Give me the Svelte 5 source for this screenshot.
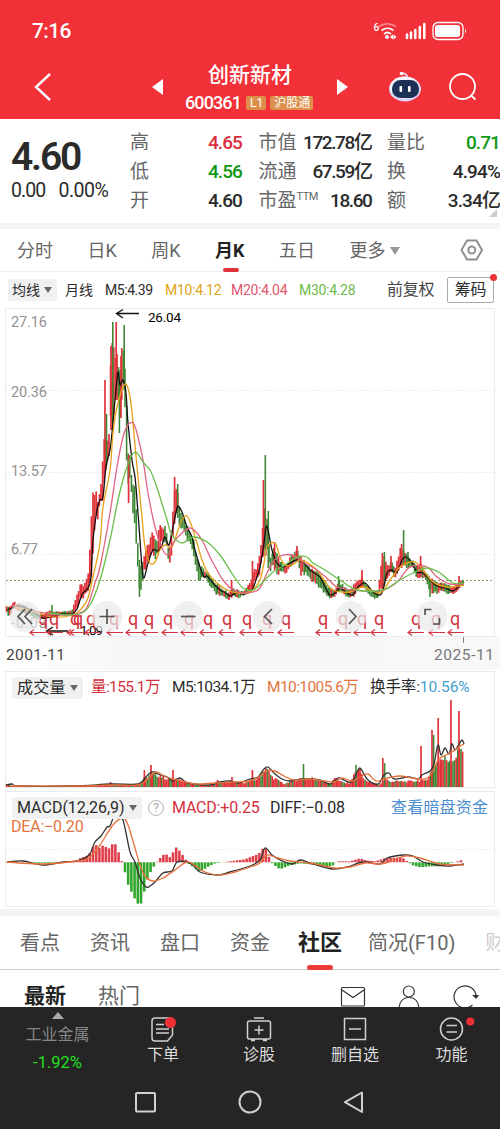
<script lang="ts">
  type Point = [number, number];
  type Band = [number, number, number];

  const quotes = [
    { label: "高", value: "4.65", tone: "up" },
    { label: "市值", value: "172.78亿" },
    { label: "量比", value: "0.71", tone: "down" },
    { label: "低", value: "4.56", tone: "down" },
    { label: "流通", value: "67.59亿" },
    { label: "换", value: "4.94%" },
    { label: "开", value: "4.60" },
    { label: "市盈", sup: "TTM", value: "18.60" },
    { label: "额", value: "3.34亿" },
  ];

  const periods = ["分时", "日K", "周K", "月K", "五日"];
  const sections = ["看点", "资讯", "盘口", "资金", "社区", "简况(F10)", "财务"];

  // high / low of the monthly bars
  const band: Band[] = [
    [6, 606, 612], [9, 606, 618], [13, 601, 610], [18, 602, 612], [24, 604, 614], [32, 608, 617],
    [42, 613, 620], [50, 610, 618], [62, 611, 615], [72, 610, 615], [77, 594, 610], [80, 582, 600],
    [84, 583, 598], [88, 575, 592], [90, 545, 585], [92, 500, 575], [94, 482, 545], [96, 490, 517],
    [98, 503, 522], [100, 490, 505], [102, 470, 507], [104, 433, 492], [107, 440, 467], [109, 430, 462],
    [111, 346, 425], [113, 340, 425], [115, 350, 400], [118, 353, 405], [120, 370, 420], [122, 345, 400],
    [124, 340, 385], [126, 385, 455], [128, 450, 490], [130, 455, 482], [132, 480, 505], [135, 482, 535],
    [137, 520, 550], [139, 560, 592], [141, 565, 593], [144, 553, 575], [147, 540, 570], [150, 538, 560],
    [153, 530, 555], [156, 540, 560], [160, 524, 550], [163, 525, 543], [166, 524, 545], [168, 545, 562],
    [171, 540, 563], [173, 505, 545], [175, 488, 520], [178, 490, 518], [180, 510, 530], [183, 512, 532],
    [186, 522, 540], [190, 530, 545], [194, 540, 560], [197, 558, 575], [199, 562, 582], [204, 568, 578],
    [210, 574, 587], [216, 582, 595], [222, 587, 597], [228, 592, 601], [232, 586, 597], [238, 590, 599],
    [244, 590, 596], [250, 582, 592], [253, 570, 588], [257, 567, 580], [260, 550, 575], [262, 530, 560],
    [264, 500, 556], [266, 512, 556], [268, 522, 560], [270, 555, 574], [274, 545, 565], [277, 552, 578],
    [281, 560, 572], [285, 565, 575], [290, 557, 570], [294, 550, 563], [297, 549, 562], [301, 555, 577],
    [306, 562, 575], [312, 568, 583], [318, 570, 587], [324, 578, 595], [329, 585, 600], [334, 590, 598],
    [339, 580, 592], [345, 586, 596], [350, 590, 599], [354, 582, 599], [358, 580, 590], [362, 575, 588],
    [366, 583, 592], [372, 590, 598], [378, 591, 600], [381, 560, 592], [384, 555, 588], [388, 565, 580],
    [391, 558, 572], [395, 567, 580], [400, 548, 570], [403, 545, 565], [408, 555, 570], [412, 560, 567],
    [416, 562, 578], [420, 562, 580], [425, 570, 580], [430, 576, 593], [436, 580, 595], [442, 582, 592],
    [448, 584, 595], [454, 586, 595], [459, 581, 590], [464, 577, 585],
  ];

  const wicks: [number, number, number, string][] = [
    [52, 605, 616, "g"], [105, 380, 450, "r"], [106.5, 414, 466, "g"], [111, 346, 430, "r"],
    [112.8, 322, 425, "g"], [116.2, 322, 400, "r"], [119.4, 380, 433, "g"], [121, 356, 418, "r"],
    [124.2, 325, 390, "g"], [128.6, 455, 503, "r"], [139.5, 560, 597, "g"], [174.6, 477, 512, "r"],
    [177.7, 484, 518, "g"], [231.6, 580, 598, "r"], [252.5, 561, 588, "r"], [263.4, 480, 556, "r"],
    [265.3, 455, 556, "g"], [268.3, 511, 568, "g"], [274.6, 542, 570, "r"], [297, 546, 560, "r"],
    [338.5, 576, 592, "g"], [362, 570, 588, "r"], [382.4, 553, 592, "r"], [384.4, 552, 586, "g"],
    [391, 556, 572, "r"], [401.6, 544, 568, "r"], [403.6, 530, 566, "g"], [408, 552, 562, "g"],
    [420.6, 556, 572, "r"], [430, 580, 597, "g"], [459, 576, 588, "r"],
  ];

  const ma5: Point[] = [
    [7, 610], [20, 606], [33, 612], [43, 618], [50, 617], [62, 614], [72, 614], [77, 609], [80, 600],
    [83, 593], [88, 588], [91, 577], [93, 540], [97, 510], [100, 500], [103, 497], [106, 467], [110, 450],
    [112, 433], [115, 400], [118, 372], [120, 385], [123, 380], [126, 393], [128, 423], [132, 460],
    [135, 477], [137, 500], [140, 540], [142, 567], [144, 578], [148, 563], [153, 550], [158, 551],
    [162, 545], [165, 537], [169, 545], [173, 527], [177, 508], [179, 507], [182, 512], [187, 527],
    [192, 537], [195, 550], [200, 567], [204, 577], [207, 576], [213, 583], [220, 590], [226, 593],
    [230, 596], [237, 593], [245, 594], [252, 590], [257, 577], [260, 567], [264, 543], [266, 527],
    [268, 530], [272, 550], [277, 563], [283, 567], [290, 563], [297, 560], [303, 562], [310, 570],
    [320, 577], [325, 587], [330, 595], [335, 593], [340, 588], [347, 593], [353, 595], [358, 587],
    [365, 583], [373, 592], [380, 595], [383, 590], [387, 573], [391, 570], [397, 572], [402, 560],
    [406, 557], [412, 563], [417, 572], [423, 573], [430, 580], [437, 586], [445, 588], [453, 591],
    [458, 587], [464, 582],
  ];
  const ma10: Point[] = [
    [15, 607], [35, 612], [52, 617], [73, 615], [82, 608], [88, 598], [93, 577], [100, 543], [103, 507],
    [110, 470], [113, 433], [117, 407], [125, 384], [130, 397], [133, 423], [137, 467], [142, 517],
    [145, 547], [150, 563], [155, 562], [160, 550], [165, 545], [172, 547], [177, 533], [182, 520],
    [187, 516], [192, 527], [197, 543], [202, 560], [208, 573], [217, 583], [227, 590], [237, 593],
    [247, 593], [253, 590], [260, 580], [264, 563], [267, 547], [275, 543], [280, 557], [285, 565],
    [292, 565], [300, 560], [308, 563], [317, 570], [324, 580], [333, 590], [350, 592], [363, 587],
    [380, 593], [390, 580], [400, 567], [410, 562], [417, 563], [423, 570], [433, 582], [447, 587], [464, 585],
  ];
  const ma20: Point[] = [
    [30, 610], [50, 614], [67, 615], [82, 612], [88, 605], [95, 583], [100, 567], [110, 513], [117, 467],
    [123, 437], [128, 425], [133, 423], [137, 433], [143, 460], [148, 493], [155, 527], [162, 548],
    [168, 555], [173, 543], [183, 532], [190, 528], [197, 533], [203, 542], [210, 557], [217, 570],
    [223, 580], [233, 590], [243, 593], [253, 592], [260, 588], [267, 573], [273, 562], [280, 556],
    [292, 555], [303, 562], [317, 570], [330, 581], [337, 587], [353, 590], [380, 591], [397, 582],
    [405, 572], [412, 566], [427, 567], [437, 577], [450, 584], [464, 584],
  ];
  const ma30: Point[] = [
    [48, 613], [67, 615], [80, 614], [90, 605], [100, 580], [110, 540], [118, 500], [125, 473], [132, 455],
    [137, 453], [143, 462], [150, 470], [155, 482], [160, 497], [167, 520], [172, 535], [182, 543],
    [193, 537], [207, 542], [220, 555], [233, 575], [243, 588], [253, 590], [263, 582], [273, 572],
    [285, 565], [297, 557], [307, 557], [313, 563], [325, 570], [340, 580], [357, 590], [383, 590],
    [400, 580], [413, 573], [427, 568], [440, 573], [453, 583], [464, 583],
  ];

  const volume: Point[] = [
    [6, 2], [8, 3], [12, 1], [70, 1.5], [110, 3], [138, 3], [143, 8], [150, 13], [155, 14], [160, 12],
    [167, 9], [175, 8], [180, 8], [190, 4], [210, 2], [217, 6], [232, 5], [245, 5], [258, 9], [264, 19],
    [266, 21], [268, 17], [272, 11], [280, 6], [285, 3], [292, 7], [305, 9], [312, 9], [320, 7], [330, 3],
    [336, 10], [342, 5], [350, 4], [355, 16], [358, 18], [362, 14], [366, 6], [380, 3], [386, 8], [390, 6],
    [410, 6], [418, 7], [425, 6], [430, 14], [434, 24], [440, 30], [447, 30], [453, 30], [458, 36], [461, 44], [464, 42],
  ];
  const volumeSpikes: [number, number, string][] = [
    [110.5, 5, "r"], [144.4, 17, "r"], [151, 22, "r"], [173, 17, "r"], [217.6, 7, "r"], [232, 10, "r"],
    [252.4, 17, "r"], [303.5, 23, "g"], [356, 22, "g"], [360, 19, "r"], [382.8, 29, "r"], [384.6, 24, "g"],
    [421, 41, "r"], [432, 57, "r"], [433.6, 52, "g"], [438.2, 69, "r"], [451, 87, "r"], [459, 76, "r"],
  ];
  const vol5: Point[] = [
    [6, 785], [12, 784], [20, 786], [75, 786], [110, 784], [138, 784], [145, 778], [150, 773], [154, 772],
    [160, 775], [167, 777], [173, 781], [180, 778], [188, 783], [210, 785], [220, 782], [230, 781],
    [238, 783], [250, 779], [258, 777], [264, 769], [268, 767], [274, 773], [282, 779], [290, 781],
    [303, 779], [312, 779], [320, 780], [330, 784], [338, 778], [344, 780], [352, 782], [358, 770],
    [361, 769], [368, 780], [378, 784], [384, 775], [389, 773], [394, 779], [408, 777], [418, 779],
    [422, 775], [430, 771], [434, 764], [438, 745], [441, 755], [445, 748], [449, 754], [452, 744],
    [455, 750], [459, 744], [462, 740], [464, 744],
  ];
  const vol10: Point[] = [
    [12, 786], [75, 786], [110, 785], [138, 785], [148, 779], [156, 772], [164, 776], [172, 779],
    [182, 781], [195, 784], [215, 783], [235, 782], [250, 781], [260, 776], [266, 771], [275, 771],
    [284, 776], [294, 780], [310, 779], [325, 781], [334, 782], [342, 778], [352, 781], [360, 777],
    [368, 774], [376, 781], [388, 778], [400, 776], [412, 778], [425, 779], [432, 773], [438, 760],
    [444, 756], [450, 753], [455, 750], [460, 746], [464, 744],
  ];

  const macd: Point[] = [
    [6, 0.5], [20, 0.5], [40, -1], [60, -0.5], [75, 1], [80, 4], [88, 7], [92, 12], [94, 19], [100, 14],
    [104, 18], [108, 12], [111, 18], [117, 18], [120, 3], [122, 1], [124, -6], [128, -22], [134, -35],
    [140, -45], [144, -30], [148, -15], [152, -7], [156, -1], [158, 2], [165, 9], [170, 5], [176, 15],
    [180, 11], [185, 4], [188, -1], [195, -6], [200, -10], [207, -5], [215, -1], [230, 1], [245, 3],
    [252, 6], [258, 8], [262, 12], [264, 17], [268, 9], [270, 2], [273, -2], [280, -7], [290, -3],
    [300, -1], [310, -2], [325, -4], [332, -4], [337, 1], [350, 1], [360, 4], [366, 2], [375, 1],
    [385, 4], [402, 5], [407, 1], [413, -3], [420, -5], [430, -4], [440, -4], [450, -1], [458, 1], [464, 3],
  ];
  const diff: Point[] = [
    [7, 862], [23, 861], [43, 865], [63, 862], [77, 861], [89, 855], [95, 842], [101, 836], [107, 827],
    [110, 826], [115, 815], [122, 818], [125, 828], [130, 852], [135, 862], [140, 878], [146, 887],
    [150, 886], [155, 882], [163, 873], [172, 871], [177, 862], [187, 862], [193, 865], [200, 872],
    [217, 875], [230, 872], [250, 866], [260, 860], [265, 848], [272, 855], [280, 860], [292, 864],
    [300, 860], [310, 863], [332, 869], [347, 867], [363, 862], [380, 864], [387, 858], [403, 855],
    [413, 856], [423, 862], [437, 865], [450, 866], [464, 864],
  ];
  const dea: Point[] = [
    [7, 862], [43, 864], [77, 861], [89, 858], [100, 845], [113, 825], [123, 818], [128, 825], [135, 848],
    [140, 865], [145, 876], [153, 881], [163, 878], [175, 870], [187, 862], [197, 867], [205, 872],
    [220, 875], [235, 872], [250, 867], [260, 863], [267, 855], [278, 858], [290, 861], [310, 863],
    [325, 866], [335, 868], [350, 867], [365, 863], [380, 864], [392, 861], [405, 856], [420, 858],
    [440, 864], [464, 865],
  ];

  const marks = [43, 54, 75, 78, 91, 114, 133, 149, 168, 189, 208, 227, 247, 267, 286, 323, 343, 362, 379, 416, 436, 455];
  const arrows = [30, 47, 67, 70, 85, 107, 126, 142, 162, 181, 200, 219, 240, 258, 278, 316, 335, 354, 371, 408, 429, 448];

  function at(points: number[][], x: number, k = 1) {
    const i = Math.max(1, points.findIndex((p) => p[0] >= x));
    const a = points[i - 1];
    const b = points[i];
    return a[k] + ((b[k] - a[k]) * (x - a[0])) / (b[0] - a[0]);
  }

  // repeatable jitter, 0..1
  function noise(n: number) {
    const v = Math.sin(n * 12.9898) * 43758.5453;
    return v - Math.floor(v);
  }

  // Catmull-Rom through the points, as cubic segments
  function curve(p: Point[]) {
    let d = `M${p[0]}`;
    for (let i = 0; i < p.length - 1; i++) {
      const a = p[i - 1] ?? p[i];
      const b = p[i];
      const c = p[i + 1];
      const e = p[i + 2] ?? c;
      d += `C${b[0] + (c[0] - a[0]) / 6},${b[1] + (c[1] - a[1]) / 6} ${c[0] - (e[0] - b[0]) / 6},${c[1] - (e[1] - b[1]) / 6} ${c}`;
    }
    return d;
  }

  const xs = Array.from({ length: 286 }, (_, i) => 6.6 + i * 1.6);

  const candles = xs.map((x, i) => {
    const hi = at(band, x, 1);
    const lo = at(band, x, 2);
    const slope = at(ma5, Math.min(463, x + 2)) - at(ma5, Math.max(8, x - 1));
    const up = slope + (noise(i) - 0.5) * 7 < 0.3;
    const span = lo - hi;
    return {
      x,
      hi: hi + span * 0.25 * noise(i + 7),
      lo: lo - span * 0.25 * noise(i + 31),
      tone: up ? "r" : "g",
    };
  });

  const volumes = xs.map((x, i) => ({
    x,
    h: at(volume, x) * (0.74 + 0.36 * noise(i + 3)),
    tone: noise(i + 53) < 0.72 ? "r" : "g",
  }));

  const bars = xs.filter((_, i) => i % 2 === 0).map((x) => ({ x, h: at(macd, x) }));
</script>

<main>
  <header>
    <div class="status">
      <span>7:16</span>
      <svg width="94" height="20" viewBox="373 21 94 20">
        <text x="373.5" y="30.5" class="six">6</text>
        <g fill="none" stroke="#fff" stroke-width="1.7">
          <path d="M379 26.5q8-5.5 17 0" opacity=".45" />
          <path d="M381.5 30.5q6-4.500 12 0M384 34q3.500-3 7 0" />
        </g>
        <circle cx="387" cy="37" r="2" fill="#fff" />
        <path d="M393 34.500l-3 2.500 3 2.500zM393.500 34.500l3 2.500-3 2.500z" fill="#fff" />
        <path d="M407 38v-3.500M411 38v-5.500M415.300 38v-8M419.800 38v-11M424.300 38v-14" stroke="#fff" stroke-width="2.500" stroke-linecap="round" />
        <rect x="433" y="22.500" width="30" height="17" rx="5" fill="none" stroke="#fff" stroke-width="1.300" />
        <rect x="435" y="25" width="25" height="12" rx="2.500" fill="#fff" />
        <path d="M465 28.500q2 2.500 0 5z" fill="#fff" />
      </svg>
    </div>
    <div class="titlebar">
      <svg class="back" width="18" height="30" viewBox="0 0 18 30"><path d="M16 2L2 15l14 13" /></svg>
      <i class="prev"></i>
      <div class="title">
        <h1>创新新材</h1>
        <p><b>600361</b><em>L1</em><em>沪股通</em></p>
      </div>
      <i class="next"></i>
      <svg class="robot" width="34" height="32" viewBox="0 0 34 32">
        <path d="M13.500 2.500q4-1 6 3" fill="none" stroke="#e8dcff" stroke-width="1.500" />
        <circle cx="13.500" cy="2.500" r="1.800" fill="#fff" />
        <ellipse cx="17" cy="18" rx="16" ry="12.500" fill="#dcd4f7" />
        <ellipse cx="16.500" cy="16.500" rx="14.500" ry="11" fill="#fbf8ff" />
        <rect x="4" y="9" width="27" height="18" rx="8.500" fill="#1d3156" />
        <rect x="11.500" y="15" width="2.600" height="6" rx="1" fill="#fff" />
        <rect x="20" y="15" width="2.600" height="6" rx="1" fill="#fff" />
      </svg>
      <svg class="search" width="28" height="28" viewBox="0 0 28 28">
        <circle cx="13.500" cy="13.500" r="12.500" />
        <path d="M22 22.500l4.500 4" />
      </svg>
    </div>
  </header>

  <section class="quote">
    <div class="price">
      <strong>4.60</strong>
      <p><span>0.00</span><span>0.00%</span></p>
    </div>
    <dl>
      {#each quotes as q}
        <div>
          <dt>{q.label}{#if q.sup}<sup>{q.sup}</sup>{/if}</dt>
          <dd class={q.tone}>{q.value}</dd>
        </div>
      {/each}
    </dl>
    <i class="corner"></i>
  </section>

  <nav class="periods">
    {#each periods as p}
      <span class:active={p === "月K"}>{p}</span>
    {/each}
    <span class="more">更多<i class="caret"></i></span>
    <svg width="24" height="22" viewBox="0 0 24 22">
      <path d="M7 1.500h9.500L22 11l-5.500 9.500H7L1.500 11z" />
      <circle cx="11.800" cy="11" r="3.500" />
    </svg>
  </nav>

  <div class="averages">
    <span class="pick">均线<i class="caret"></i></span>
    <span class="cn">月线</span>
    <span class="m5">M5:4.39</span>
    <span class="m10">M10:4.12</span>
    <span class="m20">M20:4.04</span>
    <span class="m30">M30:4.28</span>
    <span class="adj">前复权</span>
    <span class="chips">筹码</span>
  </div>

  <svg class="kline" width="500" height="362" viewBox="0 308 500 362">
    <defs>
      <linearGradient id="strip" x1="0" x2="1" y1="0" y2="0">
        <stop offset="0" stop-color="#fff" />
        <stop offset=".25" stop-color="#f7f7f7" />
        <stop offset="1" stop-color="#f8f8f8" />
      </linearGradient>
    </defs>
    <rect x="0" y="636" width="500" height="34" fill="url(#strip)" />
    <path d="M6 308.500H495M5.500 308V636M494.500 308V636M6 636.500H495" class="frame" />
    <path d="M6 390.500H494M6 472.500H494M6 554.500H494" class="grid" />
    <path d="M6 580.500H494" class="last" />

    <g class="axis">
      <text x="11" y="327" textLength="36">27.16</text>
      <text x="11" y="397" textLength="36">20.36</text>
      <text x="11" y="475.500" textLength="36">13.57</text>
      <text x="11" y="554" textLength="27">6.77</text>
      <text x="11" y="628" textLength="36">-0.03</text>
    </g>

    {#each candles as c}
      <path d="M{c.x} {c.hi}V{c.lo}" class={c.tone} />
    {/each}
    {#each wicks as [x, hi, lo, tone]}
      <path d="M{x} {hi}V{lo}" class={tone} />
    {/each}

    <g class="lines">
      <path d={curve(ma5)} stroke="#111" />
      <path d={curve(ma10)} stroke="#e6a11a" />
      <path d={curve(ma20)} stroke="#e0637f" />
      <path d={curve(ma30)} stroke="#6abf4b" />
    </g>

    <g class="extreme">
      <path d="M139 313.500H117M123 309.500L116.500 313.500L123 318" />
      <text x="148" y="321.500" textLength="33">26.04</text>
      <path d="M68 631H47M53 627L46.500 631L53 635" />
      <text x="80" y="635" textLength="23">1.09</text>
    </g>

    <g class="marks">
      {#each marks as x}
        <text {x} y="625">q</text>
      {/each}
      {#each arrows as x}
        <path d="M{x + 16} 632.500H{x}M{x + 4} 629.500L{x} 632.500L{x + 4} 635.500" />
      {/each}
    </g>

    <g class="tools">
      {#each [25, 107, 188, 268, 351, 432] as x}
        <circle cx={x} cy="616.500" r="15.500" />
      {/each}
      <path d="M25 609L18 616.500L25 624M32 609L25 616.500L32 624" />
      <path d="M99.500 616.500H114.500M107 609V624" />
      <path d="M181 616.500H195.500" />
      <path d="M272 609L264.500 616.500L272 624" />
      <path d="M349 609L356 616.500L349 624" />
      <path d="M425 615V609.500H431.500M433 624H439.500V618" />
    </g>

    <path d="M463.500 637V643" stroke="#888" />
    <text x="6" y="660" class="date dark" textLength="59">2001-11</text>
    <text x="434" y="660" class="date" textLength="60">2025-11</text>
  </svg>

  <section class="panel volume">
    <div class="legend">
      <span class="pick">成交量<i class="caret"></i></span>
      <span class="red">量:155.1万</span>
      <span>M5:1034.1万</span>
      <span class="orange">M10:1005.6万</span>
      <span>换手率:<span class="blue">10.56%</span></span>
    </div>
    <svg width="500" height="118" viewBox="0 671 500 118">
      <path d="M6 671.500H495M5.500 671V787M494.500 671V787M6 787.500H495" class="frame" />
      {#each volumes as v}
        <path d="M{v.x} 787V{787 - v.h}" class={v.tone} />
      {/each}
      {#each volumeSpikes as [x, h, tone]}
        <path d="M{x} 787V{787 - h}" class={tone} />
      {/each}
      <g class="lines">
        <path d={curve(vol5)} stroke="#333" />
        <path d={curve(vol10)} stroke="#e8703a" />
      </g>
    </svg>
  </section>

  <section class="panel macd">
    <div class="legend">
      <span class="pick">MACD(12,26,9)<i class="caret"></i></span>
      <span class="help">?</span>
      <span class="red">MACD:+0.25</span>
      <span>DIFF:−0.08</span>
      <span class="link">查看暗盘资金</span>
      <span class="orange dea">DEA:−0.20</span>
    </div>
    <svg width="500" height="120" viewBox="0 789 500 120">
      <path d="M6 791.500H495M5.500 791V906M494.500 791V906M6 906.500H495" class="frame" />
      <path d="M6 849.500H494" class="grid" />
      {#each bars as b}
        <path d="M{b.x} 862.300v{-b.h}" class={b.h > 0 ? "mr" : "mg"} />
      {/each}
      <g class="lines">
        <path d={curve(diff)} stroke="#333" />
        <path d={curve(dea)} stroke="#e8703a" />
      </g>
    </svg>
  </section>

  <nav class="sections">
    {#each sections as s}
      <span class:active={s === "社区"}>{s}</span>
    {/each}
  </nav>

  <div class="feed">
    <b>最新</b>
    <span>热门</span>
    <svg width="140" height="26" viewBox="339 984 140 26">
      <rect x="341.500" y="987.500" width="23" height="18.500" rx="1" />
      <path d="M342 990l11 7.500 11-7.500" />
      <circle cx="408.800" cy="991.500" r="5.500" />
      <path d="M399 1010c0-8 4-12.500 10-12.500s10 4.500 10 12.500" />
      <path d="M476 995.500a11 11 0 1 0-3.500 9.500" />
      <path d="M473.500 995.500h4.500l-2 2.500z" fill="#333" />
    </svg>
  </div>

  <footer>
    <div class="menu">
      <div class="sector">
        <i></i>
        <span>工业金属</span>
        <b>-1.92%</b>
      </div>
      <div class="item">
        <svg width="26" height="26" viewBox="0 0 26 26">
          <path d="M5 2h14.500q3 0 3 3v14l-5 6H5q-3 0-3-3V5q0-3 3-3zM6 8.500h8M6 13h13M6 17h13" />
          <circle cx="20.500" cy="6.500" r="5.500" class="dot" />
        </svg>
        下单
      </div>
      <div class="item">
        <svg width="26" height="26" viewBox="0 0 26 26">
          <path d="M8 2h10M3.500 5h19q2 0 2 2v14q0 2-2 2h-19q-2 0-2-2V7q0-2 2-2zM13 9.500v9M8.500 14h9M5 24.500h4M17 24.500h4" />
        </svg>
        诊股
      </div>
      <div class="item">
        <svg width="26" height="26" viewBox="0 0 26 26">
          <path d="M2.500 2.500h21v21h-21zM7 13h12" />
        </svg>
        删自选
      </div>
      <div class="item">
        <svg width="46" height="26" viewBox="-10 0 46 26">
          <circle cx="12.500" cy="13" r="11" />
          <path d="M7.500 9.500h10.500M7.500 16h10.500" />
          <circle cx="31.300" cy="5.500" r="4" class="dot" />
        </svg>
        功能
      </div>
    </div>
    <svg class="system" width="500" height="30" viewBox="0 1087 500 30">
      <rect x="136" y="1093" width="19" height="18.500" rx="1" />
      <circle cx="250" cy="1102" r="10.500" />
      <path d="M362 1092.500V1112L345 1102.200z" stroke-linejoin="round" />
    </svg>
  </footer>
</main>

<style>
  :global(body) {
    margin: 0;
  }

  main {
    width: 500px;
    height: 1129px;
    overflow: hidden;
    background: #fff;
    color: #2b2b2b;
    font-family: Roboto, "Noto Sans CJK SC", sans-serif;
    font-size: 15px;
    line-height: 1;
    white-space: nowrap;
  }

  i,
  em {
    font-style: normal;
  }

  h1,
  p,
  dl,
  dd {
    margin: 0;
  }

  header {
    height: 119px;
    background: #f13038;
    color: #fff;
  }

  .status {
    display: flex;
    justify-content: space-between;
    box-sizing: border-box;
    height: 62px;
    padding: 21px 33px 0 32px;
    font-size: 21px;
    font-weight: 500;
    letter-spacing: -0.6px;
  }

  .six {
    font-size: 10px;
    fill: #fff;
  }

  .titlebar {
    display: grid;
    grid-template-columns: 118px 34px 162px 41px 60px 28px;
    align-items: center;
    height: 50px;
    padding-left: 34px;
  }

  .titlebar > svg,
  .titlebar > i {
    margin-bottom: 6px;
  }

  .back,
  .search {
    fill: none;
    stroke: #fff;
    stroke-width: 2.4;
  }

  .search {
    stroke-width: 1.8;
  }

  .prev,
  .next {
    width: 0;
    border: 8px solid transparent;
    border-left: 0;
    border-right: 11px solid #fff;
  }

  .next {
    margin-left: -11px;
    border-right: 0;
    border-left: 11px solid #fff;
  }

  .title {
    width: 130px;
  }

  .title h1 {
    margin-left: 22px;
    font-size: 21px;
    font-weight: 500;
    line-height: 26px;
  }

  .title p {
    display: flex;
    align-items: center;
    gap: 4px;
    height: 30px;
    margin-left: -1px;
  }

  .title b {
    margin-right: 1px;
    font-size: 18px;
    font-weight: 500;
    letter-spacing: -0.9px;
  }

  .title em {
    padding: 0 3px 0 4px;
    border-radius: 2px;
    background: #dd904c;
    font-size: 12px;
    line-height: 14px;
  }

  .robot {
    margin-left: -1px;
  }

  .quote {
    position: relative;
    display: flex;
    height: 104px;
    border-bottom: 6px solid #f4f4f4;
  }

  .price {
    width: 130px;
    padding: 18px 0 0 11px;
    box-sizing: border-box;
  }

  .price strong {
    display: block;
    font-size: 39px;
    font-weight: 600;
    line-height: 41px;
    letter-spacing: -2.2px;
  }

  .price p {
    display: flex;
    gap: 13px;
    margin-top: 3px;
    font-size: 19.5px;
    letter-spacing: -0.9px;
  }

  .price p span:last-child {
    letter-spacing: -0.5px;
  }

  dl {
    display: grid;
    grid-template-columns: 112px 112px 113px;
    grid-auto-rows: 29px;
    column-gap: 16.500px;
    margin-top: 9px;
    font-size: 19px;
    line-height: 29px;
  }

  dl div {
    display: flex;
    justify-content: space-between;
  }

  dt {
    color: #666;
  }

  dt sup {
    display: inline-block;
    font-size: 11px;
    line-height: 10px;
    vertical-align: 7px;
    letter-spacing: -0.5px;
  }

  dd {
    font-weight: 500;
    letter-spacing: -0.9px;
  }

  /* the market value column is the tight one */
  dl div:nth-child(3n + 2) dd {
    letter-spacing: -1.4px;
    margin-right: -1px;
  }

  .up {
    color: #d92f3c;
  }

  .down {
    color: #0f9812;
  }

  .corner {
    position: absolute;
    right: 3px;
    bottom: 6px;
    border-left: 8px solid transparent;
    border-bottom: 8px solid #ccc;
  }

  .periods {
    display: flex;
    align-items: center;
    gap: 34.5px;
    height: 42px;
    padding-left: 17px;
    border-bottom: 1px solid #eee;
    color: #666;
    font-size: 18px;
  }

  .periods span {
    position: relative;
    line-height: 43px;
  }

  .periods .active {
    color: #222;
    font-weight: 700;
  }

  .periods .active::after,
  .sections .active::after {
    content: "";
    position: absolute;
    left: 8px;
    bottom: 0;
    width: 16px;
    height: 4px;
    border-radius: 2px;
    background: #e2303a;
  }

  .periods svg {
    margin-left: 26px;
    fill: none;
    stroke: #909090;
    stroke-width: 2;
  }

  .caret {
    display: inline-block;
    margin-left: 4px;
    border: 4.500px solid transparent;
    border-top: 6px solid #666;
    border-bottom: 0;
    vertical-align: 2px;
  }

  .periods .caret {
    border-width: 8px 5px 0;
    border-top-color: #999;
  }

  .averages {
    display: grid;
    grid-template-columns: 57px 40px 60px 66px 68px 88px 60px 47px;
    align-items: center;
    height: 36px;
    padding-left: 8px;
    font-size: 14px;
    letter-spacing: -0.3px;
  }

  .pick {
    justify-self: start;
    padding: 0 5px;
    border-radius: 2px;
    background: #f1f1f1;
    line-height: 22px;
  }

  .averages .pick {
    padding: 0 5px 0 4px;
    letter-spacing: 0;
  }

  .averages .cn {
    letter-spacing: 0;
  }

  .m5 {
    letter-spacing: -0.45px;
  }

  .m10 {
    color: #dfa516;
  }

  .m20 {
    color: #e0566f;
  }

  .m30 {
    color: #6dbb4a;
  }

  .adj {
    color: #444;
    font-size: 16px;
  }

  .chips {
    position: relative;
    box-sizing: border-box;
    height: 26px;
    border: 1px solid #aaa;
    border-radius: 2px;
    font-size: 16px;
    line-height: 24px;
    text-align: center;
  }

  .chips::after {
    content: "";
    position: absolute;
    top: -4px;
    right: -4px;
    width: 7px;
    height: 7px;
    border-radius: 50%;
    background: #ee2f37;
  }

  svg {
    display: block;
  }

  .frame {
    fill: none;
    stroke: #ebebeb;
  }

  .grid {
    stroke: #ececec;
    stroke-dasharray: 1.500 1.500;
  }

  .last {
    stroke: #9c9668;
    stroke-dasharray: 2 2;
  }

  .axis text {
    fill: #929292;
    font-size: 14.500px;
  }

  .r {
    stroke: #e03238;
    stroke-width: 1.700;
  }

  .g {
    stroke: #3f8735;
    stroke-width: 1.600;
  }

  .mr {
    stroke: #e0404c;
    stroke-width: 2.600;
  }

  .mg {
    stroke: #30a52c;
    stroke-width: 2.600;
  }

  .lines path {
    fill: none;
    stroke-width: 1.300;
  }

  .extreme path {
    fill: none;
    stroke: #111;
    stroke-width: 1.300;
  }

  .extreme text {
    font-size: 13.5px;
  }

  .marks text {
    fill: #d23340;
    font-size: 18px;
    text-anchor: middle;
  }

  .marks path {
    fill: none;
    stroke: #d23340;
    stroke-width: 1.200;
  }

  .tools circle {
    fill: #e9e9e9;
    opacity: 0.7;
  }

  .tools path {
    fill: none;
    stroke: #555;
    stroke-width: 1.700;
  }

  .date {
    fill: #777;
    font-size: 15.500px;
  }

  .date.dark {
    fill: #444;
  }

  .panel {
    position: relative;
    margin-top: 1px;
  }

  .legend {
    position: absolute;
    inset: 6px 0 auto;
    display: grid;
    grid-template-columns: 79px 81px 95px 103px auto;
    align-items: center;
    padding-left: 12px;
    font-size: 15.5px;
    letter-spacing: -0.6px;
  }

  .volume .legend span:last-child {
    letter-spacing: -0.1px;
  }

  .volume .pick {
    font-size: 16px;
    letter-spacing: 0.2px;
  }

  .macd {
    margin-top: 0;
  }

  .macd .legend {
    inset: 8px 0 auto;
    grid-template-columns: 136px 24px 98px 121px auto;
    font-size: 16px;
    letter-spacing: -0.2px;
  }

  .macd .pick {
    letter-spacing: 0;
  }

  .legend .dea {
    grid-column: 1;
    margin: 0 0 0 -1px;
  }

  .red {
    color: #d6303c;
  }

  .orange {
    color: #e5743c;
  }

  .blue {
    color: #3f9fd0;
  }

  .link {
    color: #4a8ed0;
    letter-spacing: 0.2px;
  }

  .help {
    width: 14px;
    height: 14px;
    border: 1px solid #b5b5b5;
    border-radius: 50%;
    color: #aaa;
    font-size: 12px;
    line-height: 14px;
    text-align: center;
  }

  .sections {
    display: flex;
    align-items: center;
    height: 53px;
    padding-left: 20px;
    gap: 30px;
    border-top: 7px solid #f4f4f4;
    border-bottom: 1px solid #ccc;
    color: #666;
    font-size: 20px;
  }

  .sections span {
    position: relative;
    line-height: 54px;
  }

  .sections .active {
    margin: 0 -4px 0 -2px;
    color: #222;
    font-size: 22px;
    font-weight: 700;
  }

  .sections .active::after {
    left: 9px;
    bottom: 0;
    width: 26px;
    height: 5px;
    border-radius: 3px;
    background: #ee3a3a;
  }

  .sections span:last-child {
    color: #ccc;
  }

  .feed {
    display: grid;
    grid-template-columns: 74px 241px 140px;
    height: 37px;
    padding-left: 24px;
    overflow: hidden;
    color: #666;
    font-size: 21px;
    line-height: 52px;
  }

  .feed b {
    color: #222;
  }

  .feed svg {
    margin-top: 14px;
    fill: none;
    stroke: #333;
    stroke-width: 1.200;
  }

  footer {
    position: relative;
    height: 122px;
    background: #252525;
    color: #ddd;
  }

  .menu {
    display: grid;
    grid-template-columns: 115px 96px 96px 96px 97px;
    height: 80px;
    font-size: 16px;
  }

  .sector,
  .item {
    display: flex;
    flex-direction: column;
    align-items: center;
  }

  .sector i {
    margin-top: 5px;
    border: 6px solid transparent;
    border-top: 0;
    border-bottom: 7px solid #aaa;
  }

  .sector span {
    margin-top: 8px;
    color: #858585;
  }

  .sector b {
    margin-top: 12px;
    color: #20e020;
    font-weight: 400;
    font-size: 16.5px;
  }

  .item {
    gap: 5px;
    padding-top: 9px;
  }

  .item svg,
  .system {
    fill: none;
    stroke: #d0d0d0;
    stroke-width: 1.500;
  }

  .item .dot {
    fill: #ee3035;
    stroke: none;
  }

  .system {
    stroke-width: 2;
  }
</style>
